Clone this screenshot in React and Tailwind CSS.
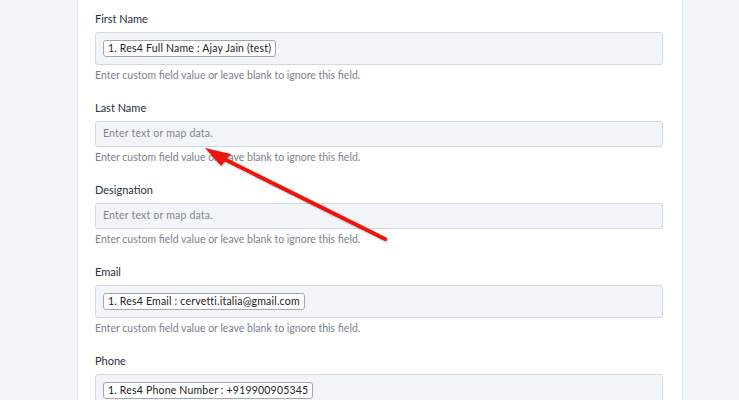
import React from 'react';

const HINT = 'Enter custom field value or leave blank to ignore this field.';

const fields = [
  { label: 'First Name', chip: '1. Res4 Full Name : Ajay Jain (test)' },
  { label: 'Last Name' },
  { label: 'Designation' },
  { label: 'Email', chip: '1. Res4 Email : cervetti.italia@gmail.com' },
  { label: 'Phone', chip: '1. Res4 Phone Number : +919900905345' },
];

function MapField({ label, chip }) {
  return (
    <div className="mb-[19px]">
      <div className="text-[11px] leading-[14px] text-[#26303b]">{label}</div>
      <div
        className={`mt-[6px] rounded-[3px] border border-[#d3d8df] bg-[#f2f5f8] px-[7px] flex items-center ${
          chip ? 'h-[33px]' : 'h-[26px]'
        }`}
      >
        {chip ? (
          <span className="h-[17px] flex items-center rounded-[3px] border border-[#a3a8ae] bg-white px-[4px] text-[10.5px] text-[#222] tracking-[0.2px]">
            {chip}
          </span>
        ) : (
          <span className="text-[10.5px] text-[#7d858f] tracking-[0.2px]">Enter text or map data.</span>
        )}
      </div>
      <div className="mt-[3px] text-[10.5px] leading-[14px] text-[#7a828c]">{HINT}</div>
    </div>
  );
}

export default function App() {
  return (
    <div
      className="relative h-[400px] w-[739px] overflow-hidden bg-[#f1f4f8]"
      style={{ fontFamily: 'Lato, "Open Sans", sans-serif' }}
    >
      <div className="ml-[77px] h-full w-[606px] border-x border-[#e3e8ee] bg-white pl-[17px] pr-[19px] pt-[12px]">
        {fields.map((f) => (
          <MapField key={f.label} {...f} />
        ))}
      </div>

      {/* red pointer arrow */}
      <svg className="absolute left-0 top-0" width="739" height="400" viewBox="0 0 739 400">
        <defs>
          <filter id="arrowShadow" x="-10%" y="-10%" width="120%" height="120%">
            <feDropShadow dx="1" dy="1" stdDeviation="1" floodColor="#000" floodOpacity="0.25" />
          </filter>
        </defs>
        <g filter="url(#arrowShadow)">
          <line x1="385" y1="239" x2="220" y2="157" stroke="#ea1410" strokeWidth="4" strokeLinecap="round" />
          <polygon points="205,148 231,154 221,166" fill="#ea1410" />
        </g>
      </svg>
    </div>
  );
}
